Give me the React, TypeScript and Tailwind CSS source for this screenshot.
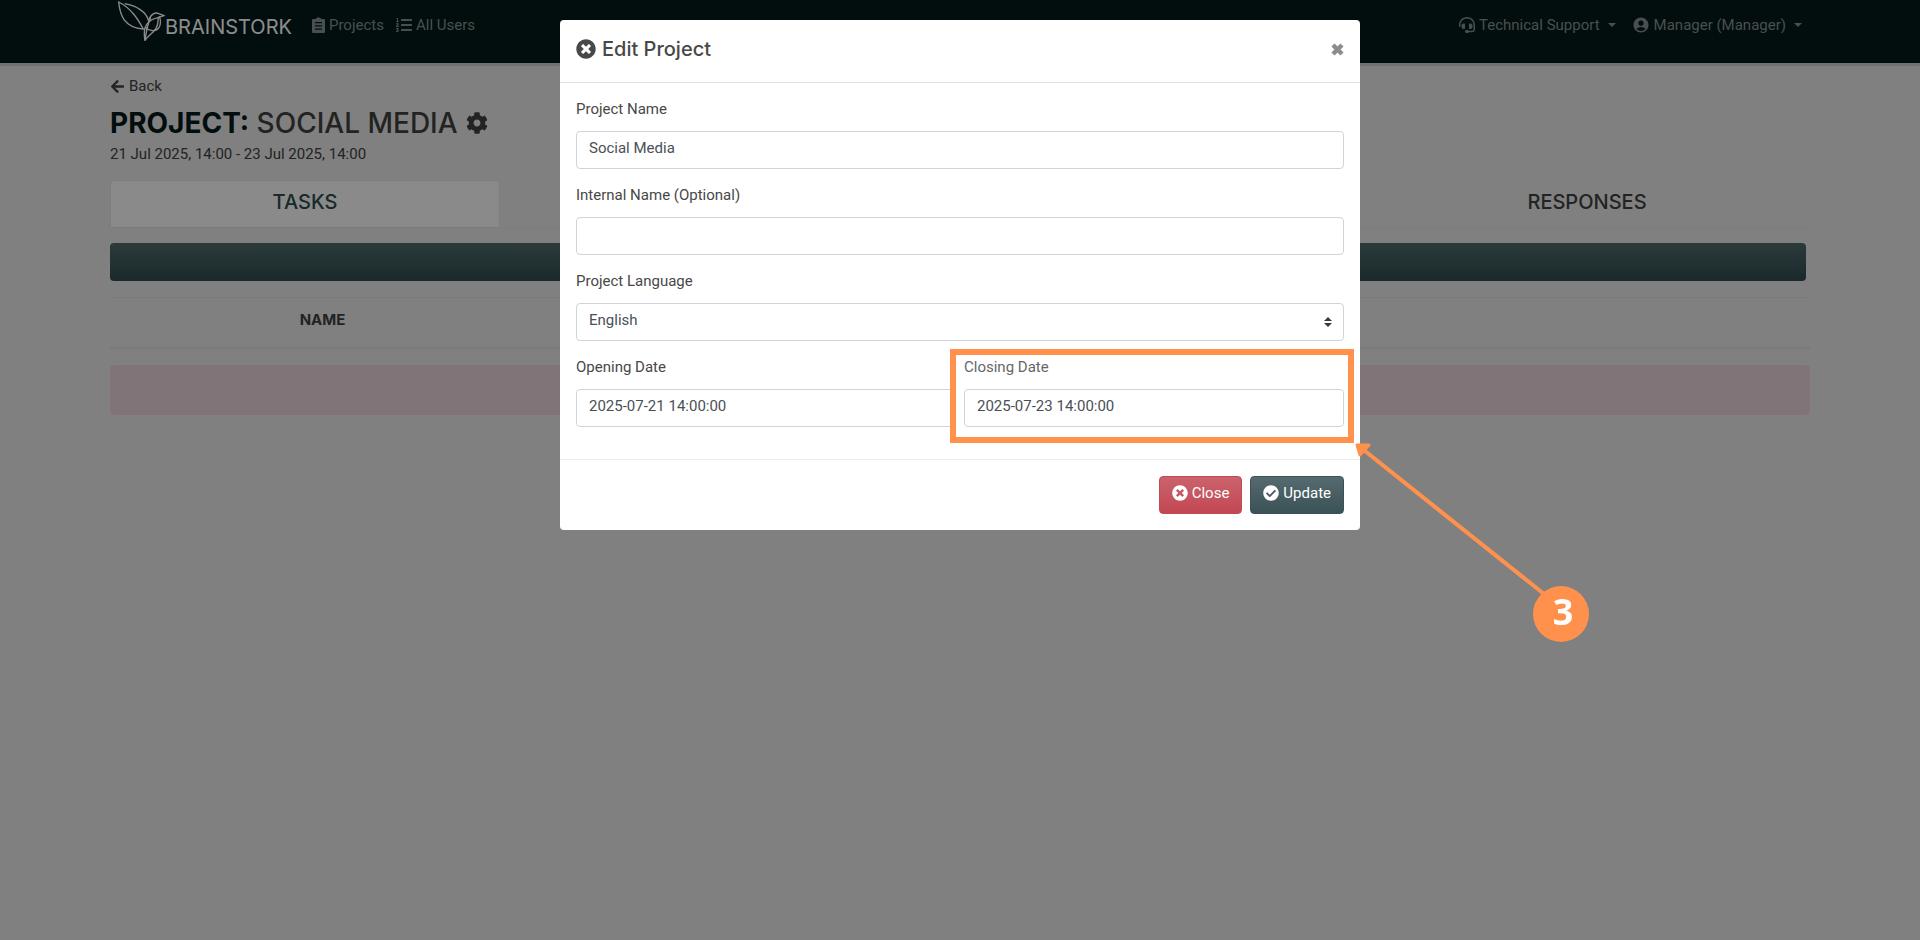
import React from 'react';
import { FaArrowLeft, FaCheckCircle, FaCog, FaListOl, FaTimesCircle } from 'react-icons/fa';
import { FaHeadset } from 'react-icons/fa6';
import { MdAccountCircle } from 'react-icons/md';

interface FieldProps {
  id: string;
  label: string;
  children: React.ReactNode;
}

const controlClass =
  'block w-full h-[38px] rounded border border-[#ced4da] bg-white px-3 pb-1 text-[#495057] outline-none';

const Field: React.FC<FieldProps> = ({ id, label, children }) => (
  <div>
    <label htmlFor={id} className="block h-6 mb-2 leading-5">
      {label}
    </label>
    {children}
  </div>
);

const Caret = () => (
  <svg width="8" height="4" viewBox="0 0 8 4" className="ml-2 fill-current" aria-hidden="true">
    <path d="M0 0h8L4 4z" />
  </svg>
);

const ClipboardIcon = () => (
  <svg width="13" height="16" viewBox="0 0 13 16" aria-hidden="true">
    <path
      className="fill-current"
      fillRule="evenodd"
      d="M1 2h3V1h1.500a1 1 0 0 1 2 0H9v1h3a1 1 0 0 1 1 1v12a1 1 0 0 1-1 1H1a1 1 0 0 1-1-1V3a1 1 0 0 1 1-1zM3 5v1.300h7V5zM3 8.200v1.300h7V8.200zM3 11.400v1.300h7v-1.300z"
    />
  </svg>
);

const BirdLogo = () => (
  <svg width="47" height="40" viewBox="0 0 141 120" fill="none" stroke="currentColor" strokeWidth="4" aria-hidden="true">
    <path d="M2 3C6 42 18 80 76 84C60 55 40 22 2 3Z" />
    <path d="M20 8C54 14 86 32 92 60" />
    <path d="M92 60C96 40 112 32 122 38L138 44L120 50" />
    <path d="M120 50C92 56 72 74 81 118C92 98 124 92 120 50Z" />
    <path d="M98 50C88 70 84 96 81 118" />
    <path d="M124 46C134 74 120 92 100 88C88 86 84 82 84 78" />
  </svg>
);

const Navbar = () => (
  <nav className="h-[63px] bg-[#04181b] px-[110px] flex items-start justify-between text-[#858f91]">
    <div className="flex items-center h-[50px]">
      <a href="#" className="flex items-center pl-2 mr-5 text-white">
        <div className="-mt-2">
          <BirdLogo />
        </div>
        <span className="pt-1 font-[Inter] text-xl leading-6">BRAINSTORK</span>
      </a>
      <a href="#" className="flex items-center gap-1 mr-3">
        <ClipboardIcon />
        Projects
      </a>
      <a href="#" className="flex items-center gap-1">
        <FaListOl className="text-base" />
        All Users
      </a>
    </div>
    <div className="flex items-center h-[50px] gap-4 pr-2">
      <button type="button" className="flex items-center">
        <FaHeadset className="mr-1 text-base" />
        Technical Support
        <Caret />
      </button>
      <button type="button" className="flex items-center">
        <MdAccountCircle className="mr-1 text-lg" />
        Manager (Manager)
        <Caret />
      </button>
    </div>
  </nav>
);

const ProjectPage = () => (
  <main className="border-t-[3px] border-[#cfcfcf] px-[110px] pt-2.5 text-[#404040]">
    <a href="#" className="flex items-center gap-1 h-5">
      <FaArrowLeft />
      Back
    </a>
    <h1 className="flex items-center gap-2 mt-2 h-[38px] font-[Inter] text-[28px] font-medium">
      <span>
        <strong className="font-bold text-[#04181b]">PROJECT:</strong> SOCIAL MEDIA
      </span>
      <FaCog className="text-[22px]" />
    </h1>
    <p className="leading-6">21 Jul 2025, 14:00 - 23 Jul 2025, 14:00</p>

    <div className="mt-3.5 grid grid-cols-[390fr_864fr_446fr] border-b border-[#e0e2e4] font-[Inter] text-xl font-medium">
      <button type="button" className="h-[47px] pb-1 rounded-t border border-b-0 border-[#dee6ea] bg-[#fbfbfb] text-[#2f4c50]">
        TASKS
      </button>
      <span />
      <button type="button" className="h-[47px] pb-1">
        RESPONSES
      </button>
    </div>

    <div className="mt-[15px] mr-1 h-[38px] rounded bg-linear-to-b from-[#506a6b] to-[#2f4c50]" />

    <table className="mt-4 w-full table-fixed border-t border-[#dcdfe2]">
      <thead>
        <tr className="h-[50px] border-b-2 border-[#d6e0e5]">
          <th className="w-1/4 pb-1 font-[Inter] text-[15px] font-bold">NAME</th>
          <th />
        </tr>
      </thead>
    </table>

    <div className="mt-4 h-[50px] rounded bg-[#ecd4da]" />
  </main>
);

const Callout = () => (
  <>
    <div className="absolute -top-2 -bottom-4 -left-3.5 -right-2.5 border-[6px] border-[#ff914d] pointer-events-none" />
    <div className="absolute top-full left-full w-[245px] h-[215px] pointer-events-none">
      <svg width="245" height="215" viewBox="0 0 245 215" aria-hidden="true">
        <path d="M16 20L200 167" stroke="#ff914d" strokeWidth="4" />
        <path
          d="M13 18H25L16 28Z"
          fill="#ff914d"
          stroke="#ff914d"
          strokeWidth="3"
          strokeLinejoin="round"
        />
      </svg>
      <span className="absolute right-0 bottom-0 flex size-14 items-center justify-center rounded-full bg-[#ff914d] pb-1 pl-1 font-['Open_Sans'] text-4xl font-bold text-white">
        3
      </span>
    </div>
  </>
);

const EditProjectModal = () => (
  <div className="fixed inset-0 bg-black/45">
    <div role="dialog" aria-labelledby="modal-title" className="mx-auto mt-5 w-full max-w-[800px] rounded bg-white text-[#484848]">
      <div className="flex items-center justify-between border-b border-[#dee2e6] px-4 pt-3.5 pb-[18px]">
        <h2 id="modal-title" className="flex h-[30px] items-center gap-1.5 font-[Inter] text-xl font-medium">
          <FaTimesCircle />
          Edit Project
        </h2>
        <button type="button" aria-label="Dismiss" className="text-[#8c8c8c]">
          <svg width="13" height="13" viewBox="0 0 13 13" stroke="currentColor" strokeWidth="4.500" aria-hidden="true">
            <path d="M2 2L11 11M11 2L2 11" />
          </svg>
        </button>
      </div>

      <form className="flex flex-col gap-4 border-b border-[#e9ecef] px-4 pt-4 pb-8">
        <Field id="name" label="Project Name">
          <input id="name" type="text" defaultValue="Social Media" className={controlClass} />
        </Field>
        <Field id="internal-name" label="Internal Name (Optional)">
          <input id="internal-name" type="text" className={controlClass} />
        </Field>
        <Field id="language" label="Project Language">
          <div className="relative">
            <select id="language" className={`${controlClass} appearance-none`}>
              <option>English</option>
            </select>
            <svg width="8" height="10" viewBox="0 0 8 10" className="absolute right-3 top-[14px] fill-[#343a40] pointer-events-none" aria-hidden="true">
              <path d="M0 4L4 0L8 4ZM0 6H8L4 10Z" />
            </svg>
          </div>
        </Field>
        <div className="grid grid-cols-2 gap-2">
          <Field id="opening" label="Opening Date">
            <input id="opening" type="text" defaultValue="2025-07-21 14:00:00" className={controlClass} />
          </Field>
          <div className="relative text-[#666666]">
            <Field id="closing" label="Closing Date">
              <input id="closing" type="text" defaultValue="2025-07-23 14:00:00" className={controlClass} />
            </Field>
            <Callout />
          </div>
        </div>
      </form>

      <div className="flex justify-end gap-2 p-4 text-white">
        <button type="button" className="flex h-[38px] items-center gap-1 rounded border border-[#c24a56] bg-linear-to-b from-[#cb626d] to-[#c24752] px-3 pb-1">
          <FaTimesCircle className="text-base" />
          Close
        </button>
        <button type="button" className="flex h-[38px] items-center gap-1 rounded border border-[#3a5257] bg-linear-to-b from-[#566b6f] to-[#3a5156] px-3 pb-1">
          <FaCheckCircle className="text-base" />
          Update
        </button>
      </div>
    </div>
  </div>
);

const App = () => {
  return (
    <div className="min-h-screen bg-[#e9e9e9] font-[Roboto,sans-serif] text-[15px]">
      <Navbar />
      <ProjectPage />
      <EditProjectModal />
    </div>
  );
};

export default App;
